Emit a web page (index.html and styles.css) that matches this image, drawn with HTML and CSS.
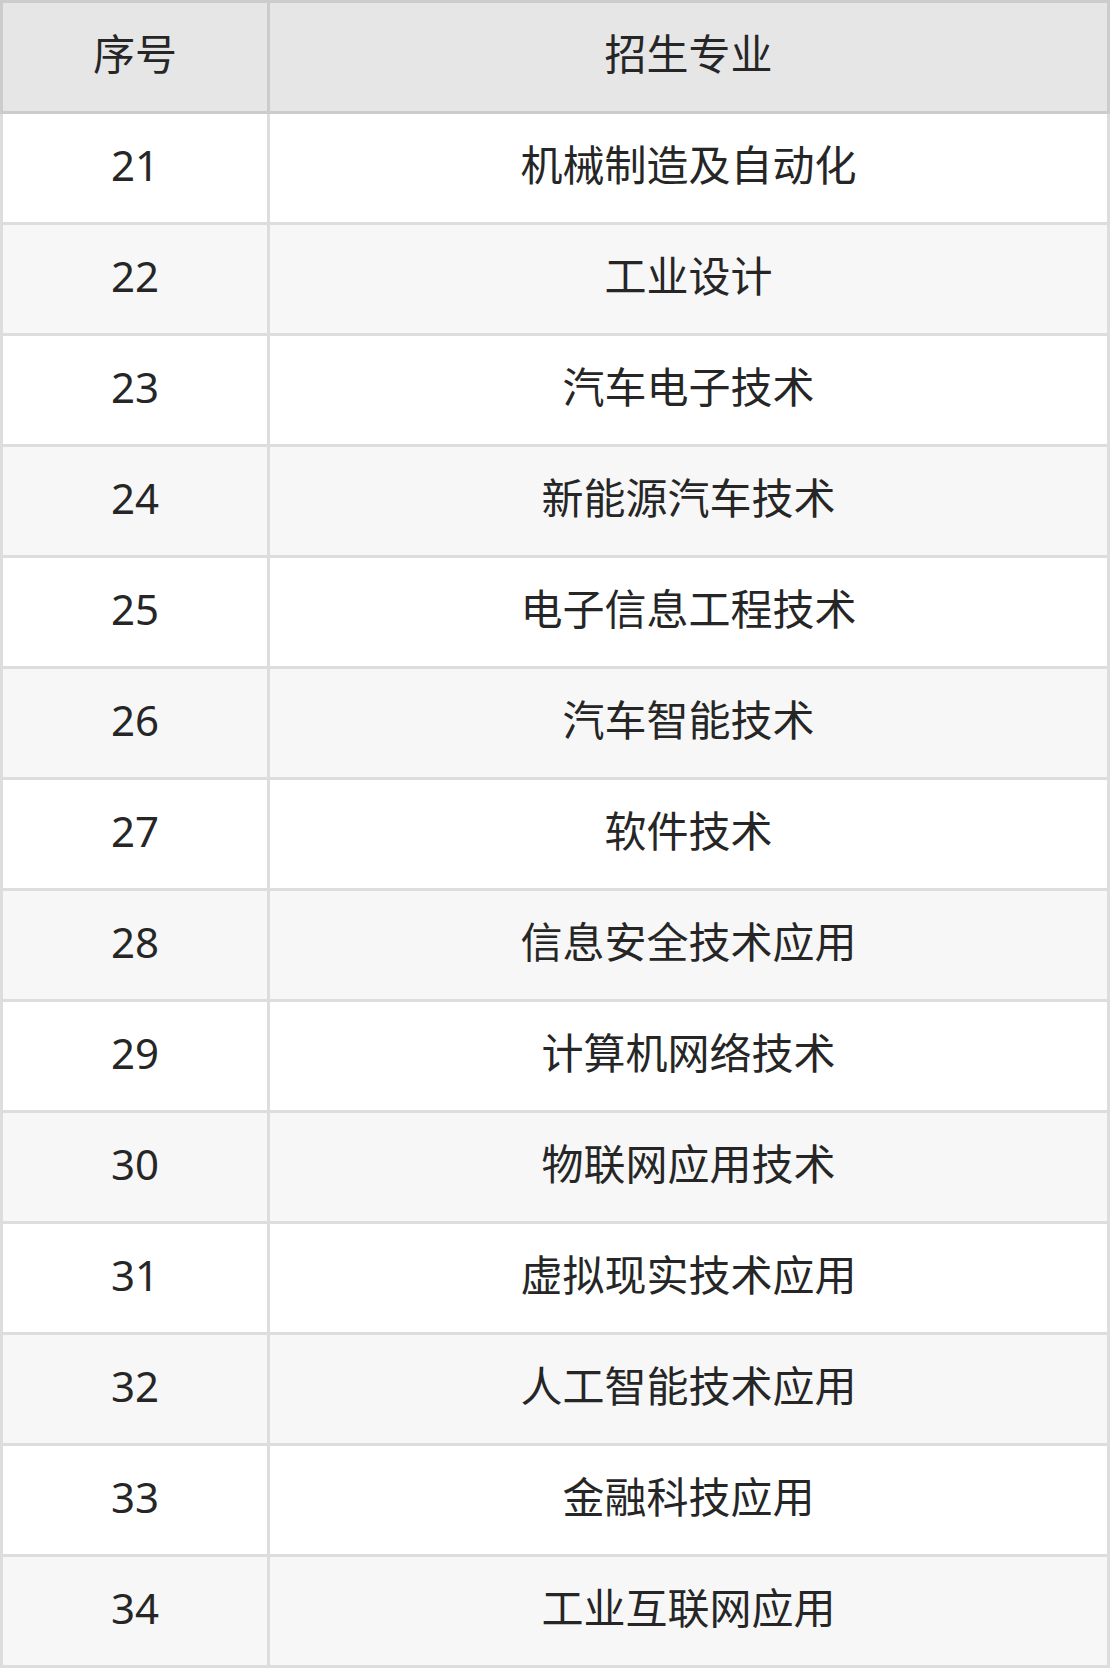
FILE: index.html
```html
<!DOCTYPE html>
<html lang="zh-CN">
<head>
<meta charset="utf-8">
<title>招生专业</title>
<link rel="stylesheet" href="styles.css">
</head>
<body>
<table class="majors">
  <colgroup><col class="col-no"><col class="col-name"></colgroup>
  <thead>
    <tr><th>序号</th><th>招生专业</th></tr>
  </thead>
  <tbody>
    <tr><td>21</td><td>机械制造及自动化</td></tr>
    <tr><td>22</td><td>工业设计</td></tr>
    <tr><td>23</td><td>汽车电子技术</td></tr>
    <tr><td>24</td><td>新能源汽车技术</td></tr>
    <tr><td>25</td><td>电子信息工程技术</td></tr>
    <tr><td>26</td><td>汽车智能技术</td></tr>
    <tr><td>27</td><td>软件技术</td></tr>
    <tr><td>28</td><td>信息安全技术应用</td></tr>
    <tr><td>29</td><td>计算机网络技术</td></tr>
    <tr><td>30</td><td>物联网应用技术</td></tr>
    <tr><td>31</td><td>虚拟现实技术应用</td></tr>
    <tr><td>32</td><td>人工智能技术应用</td></tr>
    <tr><td>33</td><td>金融科技应用</td></tr>
    <tr><td>34</td><td>工业互联网应用</td></tr>
  </tbody>
</table>
</body>
</html>
```
FILE: styles.css
```css
html, body {
  margin: 0;
  padding: 0;
  background: #ffffff;
}
body {
  font-family: "Noto Sans", "Noto Sans CJK SC", sans-serif;
  color: #262626;
}
.majors {
  border-collapse: collapse;
  table-layout: fixed;
  width: 1110px;
}
.col-no { width: 267px; }
.majors th,
.majors td {
  height: 102px;
  padding: 0 0 6px 0;
  text-align: center;
  vertical-align: middle;
  font-size: 42px;
  font-weight: 400;
  line-height: 1;
  border: 3px solid #dddddd;
}
.majors th {
  background: #e6e6e6;
  border-color: #cccccc;
}
.majors tbody tr:nth-child(even) td {
  background: #f7f7f7;
}
```
